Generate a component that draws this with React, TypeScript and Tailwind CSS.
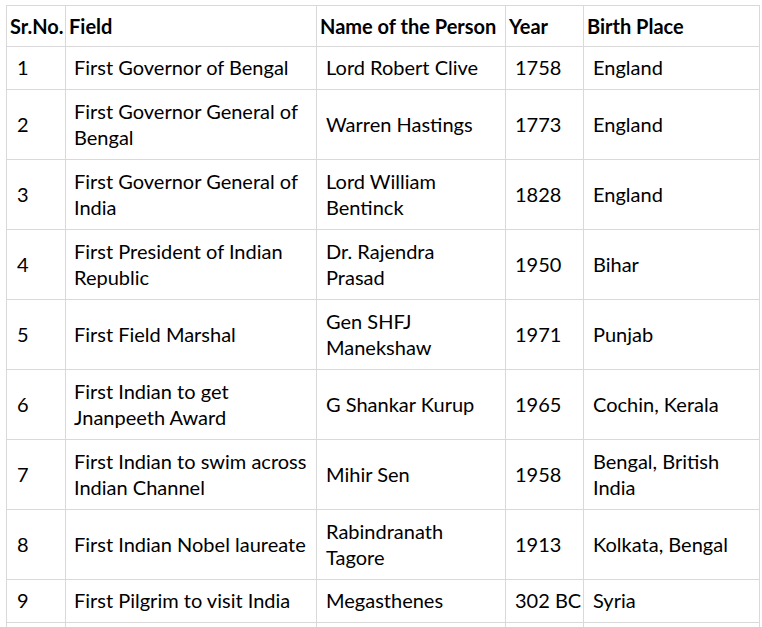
import React from 'react';

type Row = {
  no: string;
  field: string[];
  person: string[];
  year: string;
  place: string[];
  tall?: boolean;
};

const ROWS: Row[] = [
  { no: '1', field: ['First Governor of Bengal'], person: ['Lord Robert Clive'], year: '1758', place: ['England'] },
  { no: '2', field: ['First Governor General of', 'Bengal'], person: ['Warren Hastings'], year: '1773', place: ['England'], tall: true },
  { no: '3', field: ['First Governor General of', 'India'], person: ['Lord William', 'Bentinck'], year: '1828', place: ['England'], tall: true },
  { no: '4', field: ['First President of Indian', 'Republic'], person: ['Dr. Rajendra', 'Prasad'], year: '1950', place: ['Bihar'], tall: true },
  { no: '5', field: ['First Field Marshal'], person: ['Gen SHFJ', 'Manekshaw'], year: '1971', place: ['Punjab'], tall: true },
  { no: '6', field: ['First Indian to get', 'Jnanpeeth Award'], person: ['G Shankar Kurup'], year: '1965', place: ['Cochin, Kerala'], tall: true },
  { no: '7', field: ['First Indian to swim across', 'Indian Channel'], person: ['Mihir Sen'], year: '1958', place: ['Bengal, British', 'India'], tall: true },
  { no: '8', field: ['First Indian Nobel laureate'], person: ['Rabindranath', 'Tagore'], year: '1913', place: ['Kolkata, Bengal'], tall: true },
  { no: '9', field: ['First Pilgrim to visit India'], person: ['Megasthenes'], year: '302 BC', place: ['Syria'] },
];

const cell = 'flex flex-col justify-center border-l border-t border-[#d9d9d9] whitespace-nowrap';

function Lines({ lines }: { lines: string[] }) {
  return (
    <>
      {lines.map((l) => (
        <span key={l}>{l}</span>
      ))}
    </>
  );
}

export default function App() {
  return (
    <div className="min-h-screen bg-white pl-[6px] pt-[5px] text-black" style={{ fontFamily: 'Lato, "Open Sans", sans-serif' }}>
      <div className="grid w-[754px] grid-cols-[59px_251px_189px_78px_176px] border-r border-[#d9d9d9] text-[20px] leading-[26px]">
        {/* header */}
        <div className={`${cell} h-[41px] pl-[3px] font-bold`}>Sr.No.</div>
        <div className={`${cell} h-[41px] pl-[3px] font-bold`}>Field</div>
        <div className={`${cell} h-[41px] pl-[3px] font-bold`}>Name of the Person</div>
        <div className={`${cell} h-[41px] pl-[3px] font-bold`}>Year</div>
        <div className={`${cell} h-[41px] pl-[3px] font-bold`}>Birth Place</div>

        {ROWS.map((r) => {
          const h = r.tall ? 'h-[70px] pb-[2px]' : 'h-[43px] pb-[2px]';
          return (
            <React.Fragment key={r.no}>
              <div className={`${cell} ${h} pl-[10px]`}>{r.no}</div>
              <div className={`${cell} ${h} pl-[8px]`}>
                <Lines lines={r.field} />
              </div>
              <div className={`${cell} ${h} pl-[9px]`}>
                <Lines lines={r.person} />
              </div>
              <div className={`${cell} ${h} pl-[9px]`}>{r.year}</div>
              <div className={`${cell} ${h} pl-[9px]`}>
                <Lines lines={r.place} />
              </div>
            </React.Fragment>
          );
        })}

        {/* next row, cut off by the window */}
        <div className={`${cell} h-[43px]`} />
        <div className={`${cell} h-[43px]`} />
        <div className={`${cell} h-[43px]`} />
        <div className={`${cell} h-[43px]`} />
        <div className={`${cell} h-[43px]`} />
      </div>
    </div>
  );
}
